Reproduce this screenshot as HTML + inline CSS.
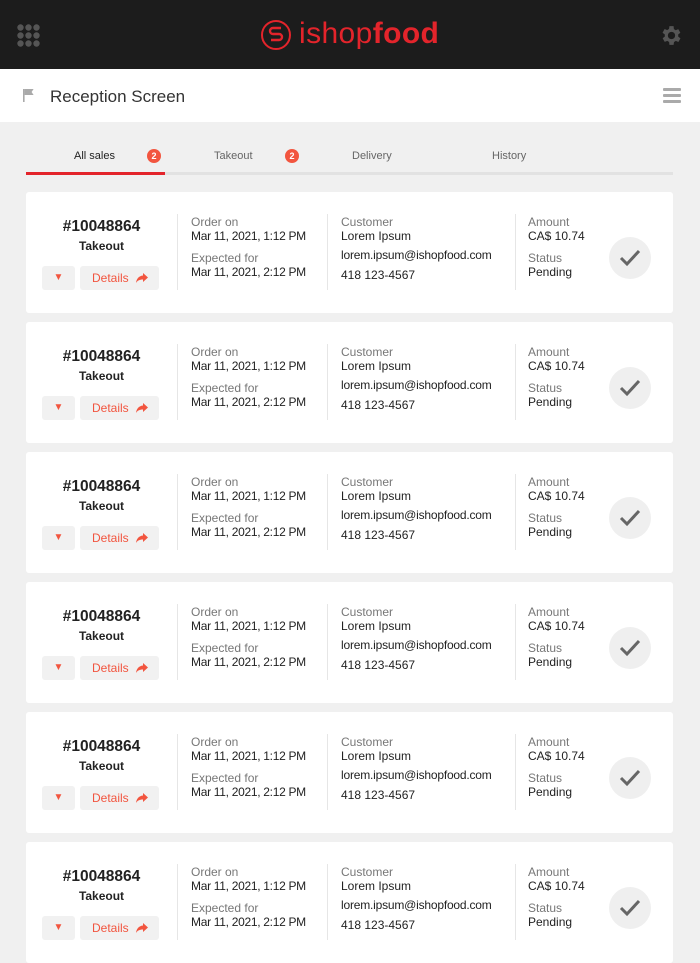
<!DOCTYPE html>
<html><head><meta charset="utf-8"><style>
*{margin:0;padding:0;box-sizing:border-box}
body{width:700px;height:934px;overflow:hidden;background:#f0f0f0;font-family:"Liberation Sans",Arial,sans-serif;position:relative}
.abs{position:absolute}
.top{left:0;top:0;width:700px;height:69px;background:#1c1c1c}
.sub{left:0;top:69px;width:700px;height:53px;background:#fff}
.card{position:absolute;left:26px;width:647px;height:121px;background:#fff;border-radius:3px}
.t{position:absolute;white-space:nowrap;font-size:12px;line-height:14px}
.lab{color:#777}
.val{color:#222}
.div{position:absolute;top:22px;width:1px;height:76px;background:#e6e6e6}
.btn{position:absolute;top:74px;height:24px;background:#f1f1f1;border-radius:3px;color:#f2553f;font-size:12px;line-height:24px}
</style></head><body>
<div class="abs top">
  <svg class="abs" style="left:17px;top:24px" width="23" height="23" viewBox="0 0 23 23" fill="#555">
    <circle cx="3.5" cy="3.5" r="3.2"/><circle cx="11.5" cy="3.5" r="3.2"/><circle cx="19.5" cy="3.5" r="3.2"/>
    <circle cx="3.5" cy="11.5" r="3.2"/><circle cx="11.5" cy="11.5" r="3.2"/><circle cx="19.5" cy="11.5" r="3.2"/>
    <circle cx="3.5" cy="19.5" r="3.2"/><circle cx="11.5" cy="19.5" r="3.2"/><circle cx="19.5" cy="19.5" r="3.2"/>
  </svg>
  <svg class="abs" style="left:260px;top:19px" width="32" height="32" viewBox="0 0 32 32" fill="none" stroke="#e3242b" stroke-width="2">
    <circle cx="16" cy="16" r="14"/>
    <path d="M21 9H13a3 3 0 0 0 0 6h6a3 3 0 0 1 0 6H11" stroke-width="2.4"/>
  </svg>
  <div class="abs" style="left:299px;top:16px;font-size:30px;line-height:36px;color:#e3242b;letter-spacing:0.4px"><span style="font-weight:300">ishop</span><b>food</b></div>
  <svg class="abs" style="left:659px;top:23px" width="25" height="25" viewBox="0 0 24 24" fill="#555"><path d="M19.4 13a7.5 7.5 0 0 0 0-2l2.1-1.6-2-3.5-2.5 1a7.6 7.6 0 0 0-1.7-1L15 3h-4l-.4 2.8a7.6 7.6 0 0 0-1.7 1l-2.5-1-2 3.5L6.6 11a7.5 7.5 0 0 0 0 2l-2.1 1.6 2 3.5 2.5-1a7.6 7.6 0 0 0 1.7 1L11 21h4l.4-2.8a7.6 7.6 0 0 0 1.7-1l2.5 1 2-3.5zM13 15.5a3.5 3.5 0 1 1 0-7 3.5 3.5 0 0 1 0 7z" transform="translate(-1 0)"/></svg>
</div>
<div class="abs sub">
  <svg class="abs" style="left:23px;top:20px" width="11" height="13" viewBox="0 0 11 13" fill="#aaa"><rect x="0" y="0" width="1.6" height="13"/><path d="M1.6 0h9l-2 3 2 3h-9z"/></svg>
  <div class="abs" style="left:50px;top:17px;font-size:17px;line-height:22px;color:#333">Reception Screen</div>
  <div class="abs" style="left:663px;top:19px;width:18px;height:3px;background:#aaa;border-radius:1px"></div>
  <div class="abs" style="left:663px;top:25px;width:18px;height:3px;background:#aaa;border-radius:1px"></div>
  <div class="abs" style="left:663px;top:31px;width:18px;height:3px;background:#aaa;border-radius:1px"></div>
</div>
<div class="abs" style="left:26px;top:172px;width:647px;height:3px;background:#e2e2e2"></div>
<div class="abs" style="left:26px;top:172px;width:139px;height:3px;background:#e3242b"></div>
<div class="abs" style="left:74px;top:150px;font-size:11px;color:#222">All sales</div>
<div class="abs" style="left:147px;top:149px;width:14px;height:14px;border-radius:50%;background:#f2553f;color:#fff;font-size:9px;line-height:14px;text-align:center;font-weight:bold">2</div>
<div class="abs" style="left:214px;top:150px;font-size:11px;color:#666">Takeout</div>
<div class="abs" style="left:285px;top:149px;width:14px;height:14px;border-radius:50%;background:#f2553f;color:#fff;font-size:9px;line-height:14px;text-align:center;font-weight:bold">2</div>
<div class="abs" style="left:352px;top:150px;font-size:11px;color:#666">Delivery</div>
<div class="abs" style="left:492px;top:150px;font-size:11px;color:#666">History</div>

<div id="cards"></div>
<script>
var h='';[192,322,452,582,712,842].forEach(function(y){
h+='<div class="card" style="top:'+y+'px">'+
'<div class="t" style="left:0;width:151px;text-align:center;top:26px;font-size:15.5px;line-height:18px;font-weight:bold;color:#222">#10048864</div>'+
'<div class="t" style="left:0;width:151px;text-align:center;top:47px;font-size:12px;font-weight:bold;color:#222">Takeout</div>'+
'<div class="btn" style="left:16px;width:33px;text-align:center;font-size:10px">&#9660;</div>'+
'<div class="btn" style="left:54px;width:79px;padding-left:12px">Details <svg style="position:absolute;left:56px;top:7px" width="12" height="10" viewBox="0 0 12 10" fill="#f2553f"><path d="M7 0l5 4.5L7 9V6.5C3.5 6.5 1.5 7.5 0 10 .5 6 2.5 3 7 2.5z"/></svg></div>'+
'<div class="div" style="left:151px"></div><div class="div" style="left:301px"></div><div class="div" style="left:489px"></div>'+
'<div class="t lab" style="left:165px;top:23px">Order on</div>'+
'<div class="t val" style="left:165px;top:37px;letter-spacing:-0.3px">Mar 11, 2021, 1:12 PM</div>'+
'<div class="t lab" style="left:165px;top:59px">Expected for</div>'+
'<div class="t val" style="left:165px;top:73px;letter-spacing:-0.3px">Mar 11, 2021, 2:12 PM</div>'+
'<div class="t lab" style="left:315px;top:23px">Customer</div>'+
'<div class="t val" style="left:315px;top:37px">Lorem Ipsum</div>'+
'<div class="t val" style="left:315px;top:56px;letter-spacing:-0.2px">lorem.ipsum@ishopfood.com</div>'+
'<div class="t val" style="left:315px;top:76px">418 123-4567</div>'+
'<div class="t lab" style="left:502px;top:23px">Amount</div>'+
'<div class="t val" style="left:502px;top:37px">CA$ 10.74</div>'+
'<div class="t lab" style="left:502px;top:59px">Status</div>'+
'<div class="t val" style="left:502px;top:73px">Pending</div>'+
'<div style="position:absolute;left:583px;top:45px;width:42px;height:42px;border-radius:50%;background:#efefef"></div>'+
'<svg style="position:absolute;left:593px;top:56px" width="22" height="20" viewBox="0 0 22 20" fill="none" stroke="#666" stroke-width="3"><path d="M2 10l6 6L20 3"/></svg>'+
'</div>';});
document.getElementById('cards').innerHTML=h;
</script>
</body></html>
